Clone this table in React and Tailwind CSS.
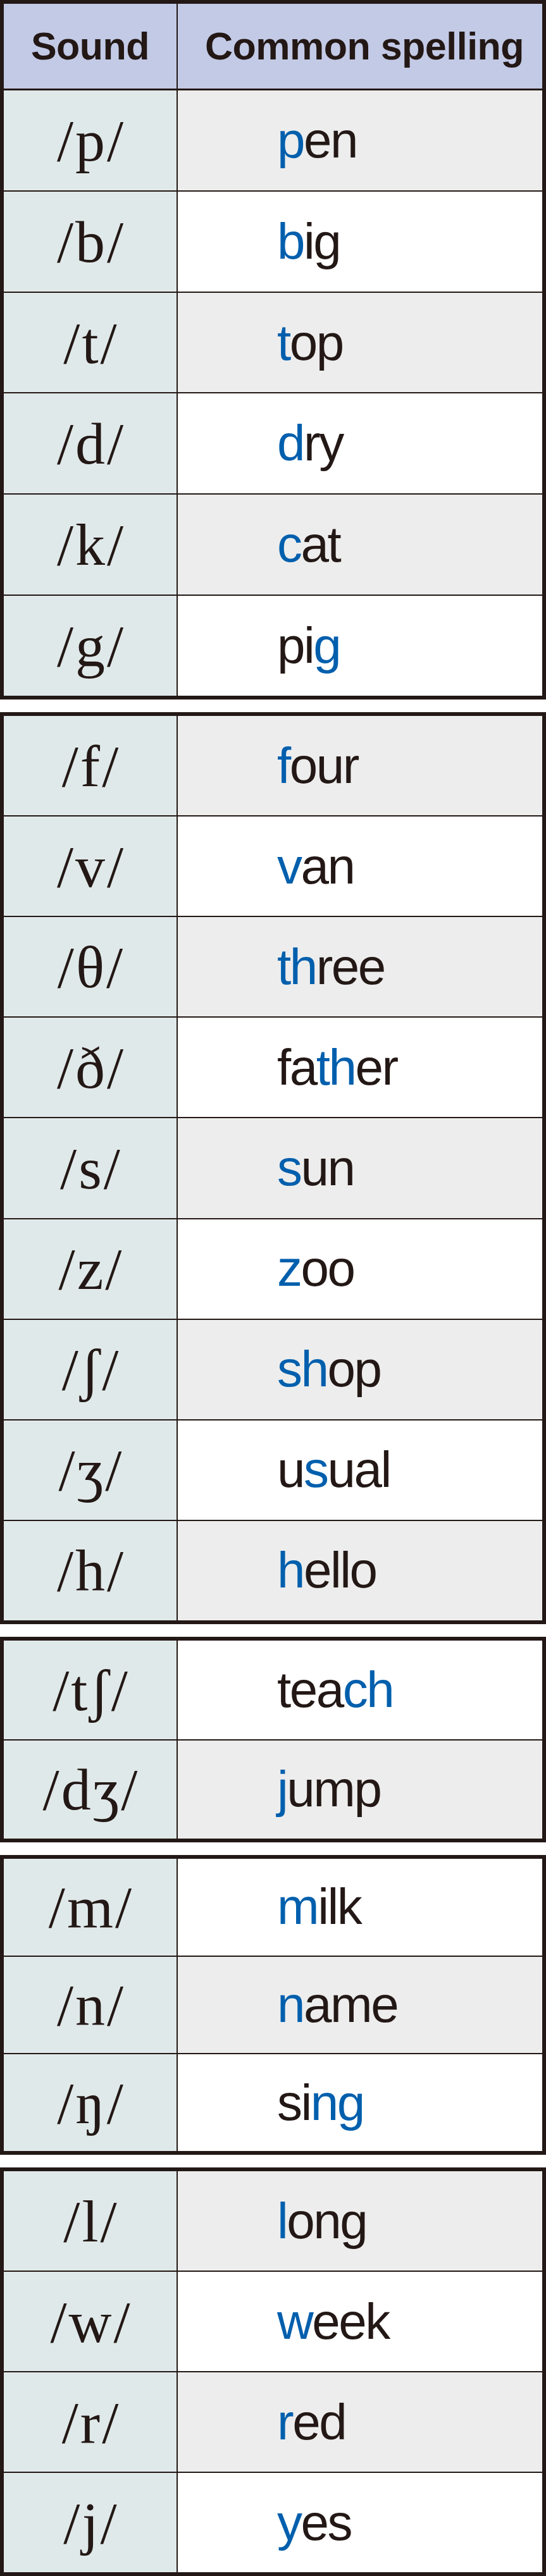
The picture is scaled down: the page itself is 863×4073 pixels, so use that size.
const groups = [
  {
    h: "h-[1106px]",
    header: true,
    rows: [
      ["/p/", ["", "p", "en"]],
      ["/b/", ["", "b", "ig"]],
      ["/t/", ["", "t", "op"]],
      ["/d/", ["", "d", "ry"]],
      ["/k/", ["", "c", "at"]],
      ["/g/", ["pi", "g", ""]],
    ],
    startGray: true,
  },
  {
    h: "h-[1442px]",
    rows: [
      ["/f/", ["", "f", "our"]],
      ["/v/", ["", "v", "an"]],
      ["/θ/", ["", "th", "ree"]],
      ["/ð/", ["fa", "th", "er"]],
      ["/s/", ["", "s", "un"]],
      ["/z/", ["", "z", "oo"]],
      ["/ʃ/", ["", "sh", "op"]],
      ["/ʒ/", ["u", "s", "ual"]],
      ["/h/", ["", "h", "ello"]],
    ],
    startGray: true,
  },
  {
    h: "h-[325px]",
    rows: [
      ["/tʃ/", ["tea", "ch", ""]],
      ["/dʒ/", ["", "j", "ump"]],
    ],
    startGray: false,
  },
  {
    h: "h-[474px]",
    rows: [
      ["/m/", ["", "m", "ilk"]],
      ["/n/", ["", "n", "ame"]],
      ["/ŋ/", ["si", "ng", ""]],
    ],
    startGray: false,
  },
  {
    h: "h-[646px]",
    rows: [
      ["/l/", ["", "l", "ong"]],
      ["/w/", ["", "w", "eek"]],
      ["/r/", ["", "r", "ed"]],
      ["/j/", ["", "y", "es"]],
    ],
    startGray: true,
  },
]

const Row = ({ sound, word, gray, first }) => {
  return (
    <div className={`flex flex-1 ${first ? "" : "border-t-2 border-[#231815]"}`}>
      <div className="w-[275px] shrink-0 bg-[#e0e9ea] border-r-2 border-[#231815] flex items-center justify-center">
        <span className="font-['Liberation_Serif',serif] text-[94px] leading-none text-[#231815] tracking-[3px] pl-[3px]">
          {sound}
        </span>
      </div>
      <div className={`flex-1 flex items-center pl-[157px] ${gray ? "bg-[#ededed]" : "bg-white"}`}>
        <span className="font-['Liberation_Sans',Arial,sans-serif] text-[80px] leading-none tracking-[-2.5px] text-[#231815]">
          {word[0]}
          <span className="text-[#005fad]">{word[1]}</span>
          {word[2]}
        </span>
      </div>
    </div>
  )
}

const App = () => {
  return (
    <div className="w-[863px] h-[4073px] overflow-hidden bg-white flex flex-col gap-[20px]">
      {groups.map((g, gi) => (
        <div key={gi} className={`${g.h} shrink-0 flex flex-col border-[6px] border-[#231815]`}>
          {g.header && (
            <div className="h-[137px] shrink-0 flex bg-[#c3cae6] border-b-[3px] border-[#231815] font-['Liberation_Sans',Arial,sans-serif] font-bold text-[61px] tracking-[-0.5px] text-[#231815] leading-none">
              <div className="w-[275px] shrink-0 border-r-2 border-[#231815] flex items-center justify-center">
                Sound
              </div>
              <div className="flex-1 flex items-center justify-center pl-[14px]">
                Common spelling
              </div>
            </div>
          )}
          {g.rows.map((r, ri) => (
            <Row
              key={ri}
              sound={r[0]}
              word={r[1]}
              first={ri === 0}
              gray={g.startGray ? ri % 2 === 0 : ri % 2 === 1}
            />
          ))}
        </div>
      ))}
    </div>
  )
}

export default App
